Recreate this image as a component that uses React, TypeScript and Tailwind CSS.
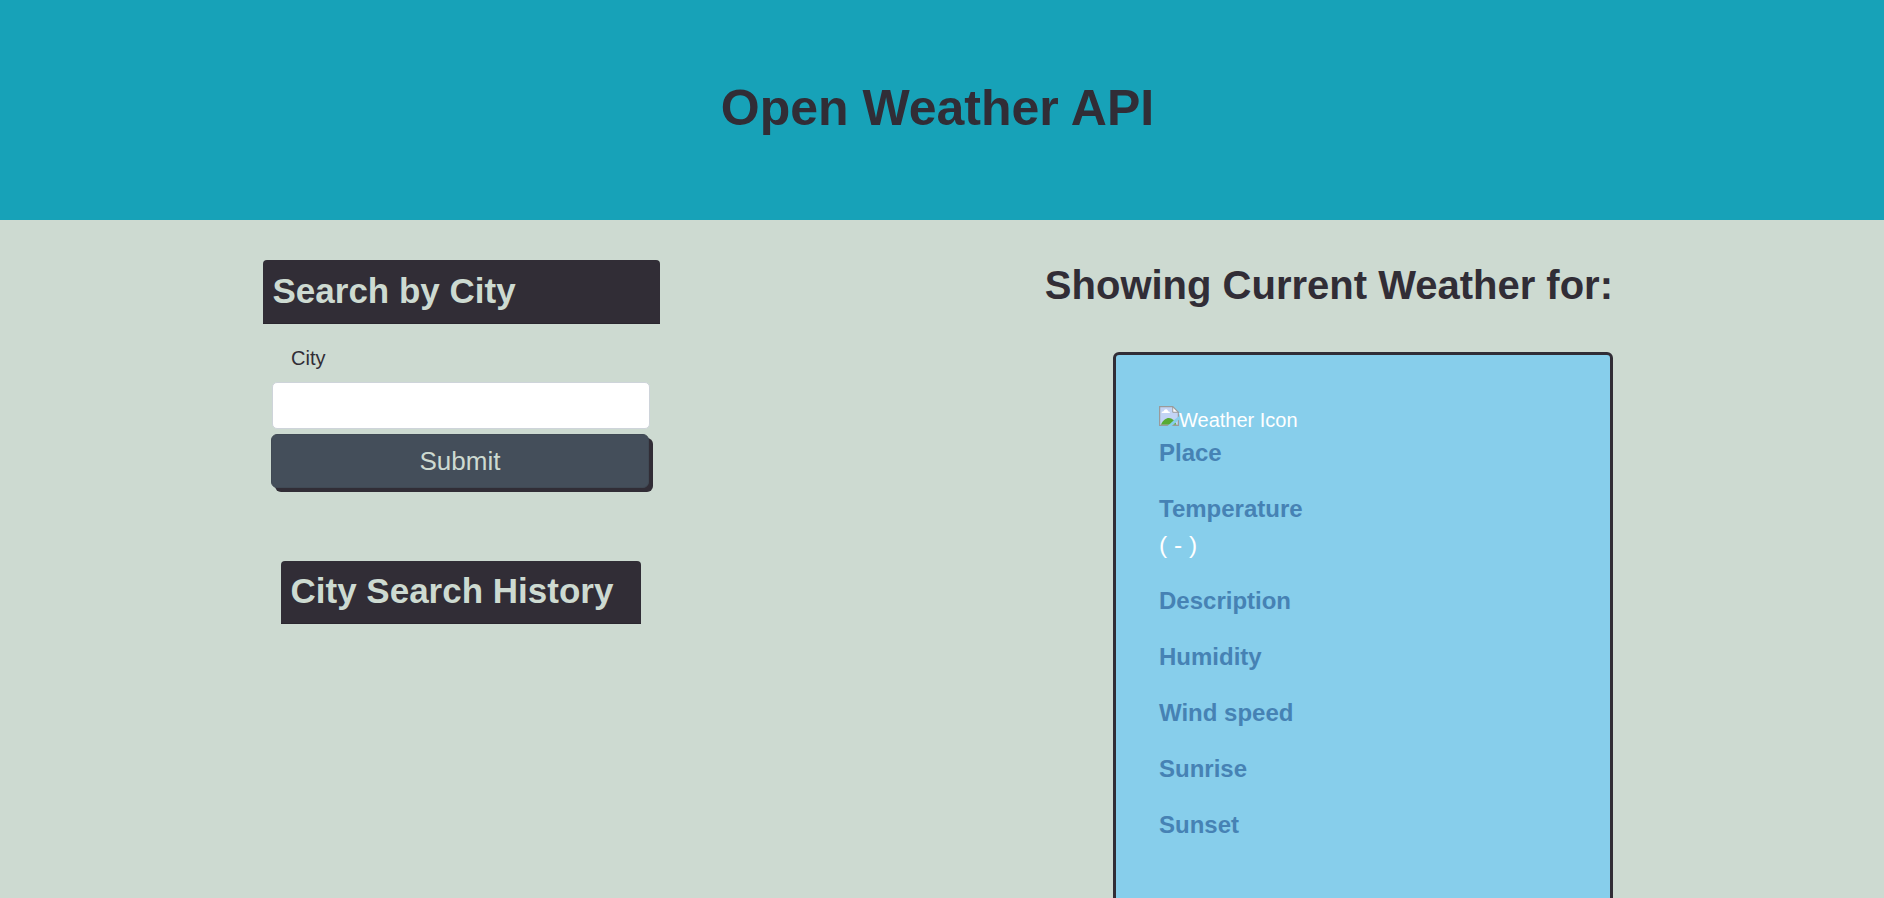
const details = ["Description", "Humidity", "Wind speed", "Sunrise", "Sunset"];

function MissingImage() {
  return (
    <svg width="20" height="20" viewBox="0 0 16 16" className="mt-px shrink-0">
      <path d="M0.5 0.5H11L15.5 5V15.5H0.5Z" fill="#c3d4f5" />
      <path d="M2 5.6Q2.1 4.2 3.7 4.1Q4.4 2.2 6 2.6Q7.2 2.9 7.2 4.2Q8.8 4.3 8.8 5.6Z" fill="#fff" />
      <path d="M1.5 15C3 11.5 5.5 9.6 8 9.6C10.5 9.6 12.5 11.5 14 15Z" fill="#57ab32" />
      <path d="M0.5 16V0.5H11L15.5 5V16M0 15.5H16" fill="none" stroke="#9a9a9a" />
      <path d="M11 0.8V5H15.2Z" fill="#fff" stroke="#9a9a9a" strokeWidth="0.8" />
      <path d="M16 8.2V11L10.2 16H6.8L12.6 10.8Z" fill="#87ceeb" />
    </svg>
  );
}

export default function App() {
  return (
    <div className="h-[898px] overflow-hidden bg-[#cddad1] font-['Liberation_Sans',Arial,sans-serif] text-[20px] leading-[30px] text-[#312d36]">
      <header className="flex h-[220px] justify-center bg-[#17a2b8] pt-[78px] pr-[9px]">
        <h1 className="text-[50px] leading-[60px] font-bold">Open Weather API</h1>
      </header>
      <main className="flex items-start justify-between pt-10 pr-[271px] pl-[263px]">
        <section className="w-[397px]">
          <h2 className="h-16 rounded-t-[4px] border-b border-[#2a262f] bg-[#312d36] px-[9.5px] pt-[10px] text-[35px] leading-[42px] font-bold text-[#cddad1]">
            Search by City
          </h2>
          <form className="flex flex-col pt-[19px] pl-[9px]">
            <label htmlFor="city" className="pl-[19px]">City</label>
            <input id="city" className="mt-[9px] h-[47px] w-[378px] rounded-[5px] border border-[#ced4da] bg-white px-4 outline-none" />
            <button type="button" className="mt-[5px] -ml-[1px] h-[54px] w-[378px] rounded-[6px] border border-[#404954] bg-[#444e5a] pb-[1px] text-[26px] leading-[38px] text-[#cddad1] shadow-[4px_4px_0_#312d36]">
              Submit
            </button>
          </form>
          <h2 className="mt-[73px] ml-[18px] h-[63px] w-[360px] rounded-t-[4px] border-b border-[#2a262f] bg-[#312d36] px-[9.5px] pt-[9px] text-[35px] leading-[42px] font-bold text-[#cddad1]">
            City Search History
          </h2>
        </section>
        <section className="flex flex-col items-end">
          <h2 className="pt-px text-[40px] leading-[48px] font-bold">Showing Current Weather for:</h2>
          <div className="mt-[43px] h-[600px] w-[500px] rounded-[6px] border-[3px] border-[#312d36] bg-[#87ceeb] pt-[50px] pl-[43px] text-white">
            <div className="flex h-[30px]">
              <MissingImage />
              <span>Weather Icon</span>
            </div>
            <h3 className="h-14 pt-[3px] text-[24px] leading-[29px] font-bold text-[#4682b4]">Place</h3>
            <h3 className="h-[33px] pt-[3px] text-[24px] leading-[29px] font-bold text-[#4682b4]">Temperature</h3>
            <p className="h-[59px] pt-[2px] text-[24.5px] leading-[38px]">( - )</p>
            {details.map((label) => (
              <h3 key={label} className="h-14 pt-[3px] text-[24px] leading-[29px] font-bold text-[#4682b4]">{label}</h3>
            ))}
          </div>
        </section>
      </main>
    </div>
  );
}
